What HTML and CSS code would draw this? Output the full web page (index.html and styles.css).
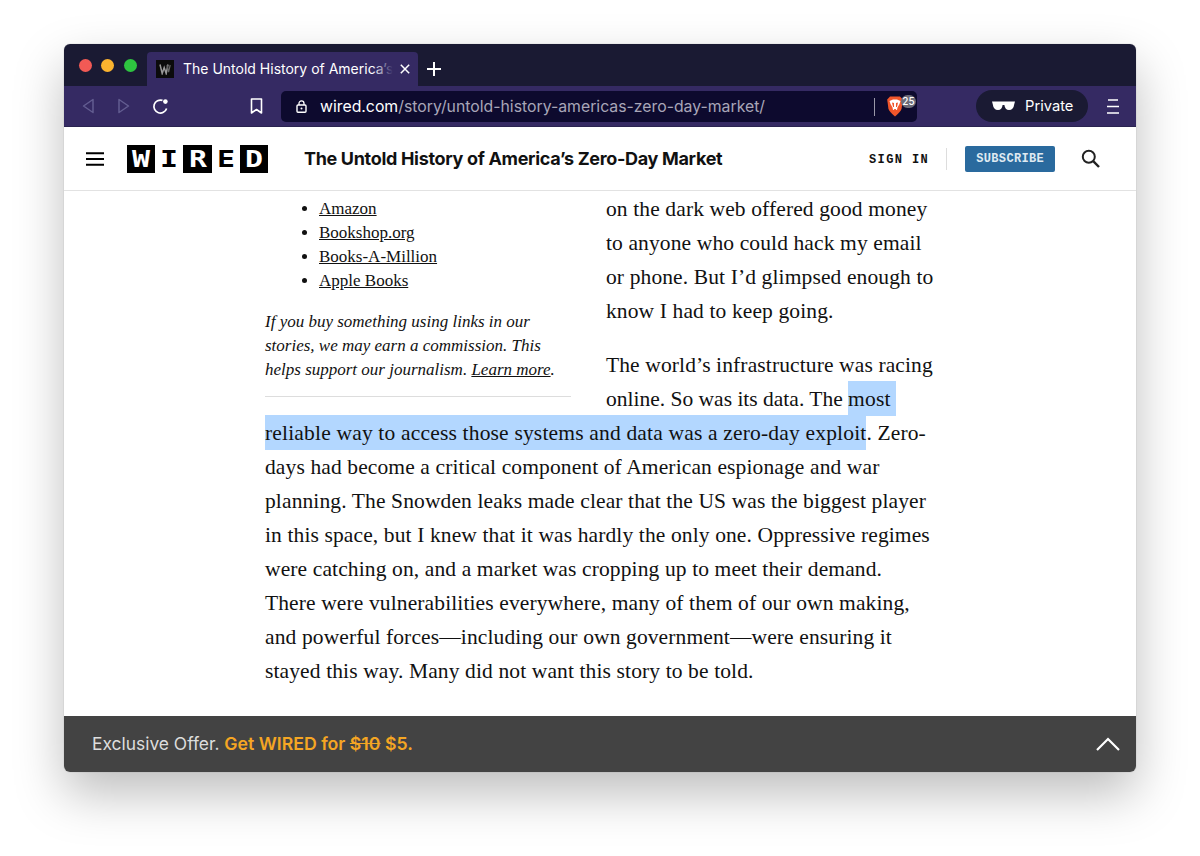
FILE: index.html
```html
<!DOCTYPE html>
<html lang="en">
<head>
    <meta charset="UTF-8">
    <title>The Untold History of America's Zero-Day Market</title>
    <link rel="stylesheet" href="styles.css">
</head>
<body>
    <div class="window">
        <div class="tabstrip">
            <div class="lights">
                <span class="light red"></span>
                <span class="light yellow"></span>
                <span class="light green"></span>
            </div>
            <div class="tab">
                <span class="favicon">
                    <svg width="12" height="12" viewBox="0 0 12 12"><path d="M1 1.5 L3.2 10.5 L5.2 4.5 L7.2 10.5 L9 1.5" fill="none" stroke="#999" stroke-width="1.5"/><path d="M8 2 L9.6 9 L11.2 2" fill="none" stroke="#666" stroke-width="1.2"/></svg>
                </span>
                <span class="tab-title">The Untold History of America’s</span>
                <span class="tab-fade"></span>
                <svg class="tab-close" width="10" height="10" viewBox="0 0 10 10"><path d="M0.8 0.8 L9.2 9.2 M9.2 0.8 L0.8 9.2" stroke="#fff" stroke-width="1.5"/></svg>
            </div>
            <svg class="new-tab" width="14" height="14" viewBox="0 0 14 14"><path d="M7 0 V14 M0 7 H14" stroke="#fff" stroke-width="2"/></svg>
        </div>

        <div class="toolbar">
            <svg class="nav-btn" width="12" height="16" viewBox="0 0 12 16"><path d="M11 1.5 L1.5 8 L11 14.5 Z" fill="none" stroke="#625c90" stroke-width="1.5" stroke-linejoin="round"/></svg>
            <svg class="nav-btn" width="12" height="16" viewBox="0 0 12 16"><path d="M1 1.5 L10.5 8 L1 14.5 Z" fill="none" stroke="#625c90" stroke-width="1.5" stroke-linejoin="round"/></svg>
            <svg class="reload" width="17" height="17" viewBox="0 0 17 17"><path d="M14.6 10.5 A6.5 6.5 0 1 1 10.5 2.4" fill="none" stroke="#fff" stroke-width="1.7"/><circle cx="13.4" cy="3.6" r="2.3" fill="#fff"/></svg>
            <svg class="bookmark" width="13" height="16" viewBox="0 0 13 16"><path d="M1.5 1 H11.5 V15 L6.5 11.5 L1.5 15 Z" fill="none" stroke="#fff" stroke-width="1.6" stroke-linejoin="round"/></svg>
            <div class="urlbar">
                <svg class="lock" width="11" height="13" viewBox="0 0 11 13"><rect x="1" y="5" width="9" height="7.2" rx="1" fill="none" stroke="#fff" stroke-width="1.4"/><path d="M3 5 V3.4 A2.5 2.5 0 0 1 8 3.4 V5" fill="none" stroke="#fff" stroke-width="1.3"/><circle cx="5.5" cy="8.6" r="1" fill="#fff"/></svg>
                <span class="url"><span class="url-host">wired.com</span>/story/untold-history-americas-zero-day-market/</span>
                <span class="url-divider"></span>
                <span class="shields">
                    <svg width="16" height="21" viewBox="0 0 16 21"><path d="M3 0.5 H13 L15.8 3.5 L14.6 12.5 Q14 15.5 8 20.5 Q2 15.5 1.4 12.5 L0.2 3.5 Z" fill="#f1562b"/><path d="M2.5 5 L6 3.5 H10 L13.5 5 L12.5 8 L10.5 11.5 L10 14 H6 L5.5 11.5 L3.5 8 Z" fill="#fff"/><path d="M5 6.5 L7 7 V11 H6 Z M11 6.5 L9 7 V11 H10 Z M6.6 13 H9.4 L8 14.8 Z" fill="#f1562b"/></svg>
                    <span class="badge">25</span>
                </span>
            </div>
            <div class="private">
                <svg width="23" height="10" viewBox="0 0 23 10"><path d="M0 0.5 H23 L22.3 3 Q21.5 9 17 9 Q13 9 12.4 4 H10.6 Q10 9 6 9 Q1.5 9 0.7 3 Z" fill="#fff"/></svg>
                <span>Private</span>
            </div>
            <svg class="menu" width="12" height="15" viewBox="0 0 12 15"><path d="M1 1 H11 M0 7.5 H12 M0 14 H12" stroke="#fff" stroke-width="1.4"/></svg>
        </div>

        <div class="page">
            <header class="site-header">
                <svg class="burger" width="18" height="14" viewBox="0 0 18 14"><path d="M0 1.2 H18 M0 7 H18 M0 12.8 H18" stroke="#000" stroke-width="2"/></svg>
                <div class="logo">
                    <span class="logo-box dark"><span class="logo-letter">W</span></span>
                    <span class="logo-box"><span class="logo-letter">I</span></span>
                    <span class="logo-box dark"><span class="logo-letter">R</span></span>
                    <span class="logo-box"><span class="logo-letter">E</span></span>
                    <span class="logo-box dark"><span class="logo-letter">D</span></span>
                </div>
                <div class="headline">The Untold History of America’s Zero-Day Market</div>
                <a class="sign-in">SIGN IN</a>
                <span class="header-divider"></span>
                <a class="subscribe">SUBSCRIBE</a>
                <svg class="search" width="19" height="19" viewBox="0 0 19 19"><circle cx="7.8" cy="7.8" r="6" fill="none" stroke="#222" stroke-width="2"/><path d="M12.2 12.2 L18 18" stroke="#222" stroke-width="2.4"/></svg>
            </header>

            <div class="article">
                <aside class="sidebar">
                    <ul class="buy-list">
                        <li><a>Amazon</a></li>
                        <li><a>Bookshop.org</a></li>
                        <li><a>Books-A-Million</a></li>
                        <li><a>Apple Books</a></li>
                    </ul>
                    <p class="note">If you buy something using links in our<br>stories, we may earn a commission. This<br>helps support our journalism. <a>Learn more</a>.</p>
                </aside>
                <p>on the dark web offered good money<br>to anyone who could hack my email<br>or phone. But I’d glimpsed enough to<br>know I had to keep going.</p>
                <p>The world’s infrastructure was racing<br><span class="tight">online. So was its data. The </span><span class="selected most">most</span><br><span class="selected">reliable way to access those systems and data was a zero-day exploit</span>. Zero-<br>days had become a critical component of American espionage and war<br>planning. The Snowden leaks made clear that the US was the biggest player<br>in this space, but I knew that it was hardly the only one. Oppressive regimes<br>were catching on, and a market was cropping up to meet their demand.<br>There were vulnerabilities everywhere, many of them of our own making,<br>and powerful forces—including our own government—were ensuring it<br>stayed this way. Many did not want this story to be told.</p>
            </div>

            <div class="offer">
                <div>Exclusive Offer. <span class="offer-deal">Get WIRED for <s>$10</s> $5.</span></div>
                <svg width="24" height="14" viewBox="0 0 24 14"><path d="M1 13 L12 2 L23 13" fill="none" stroke="#fff" stroke-width="2.2"/></svg>
            </div>
        </div>
    </div>
</body>
</html>
```

FILE: styles.css
```css
html, body {
    margin: 0;
    height: 100%;
    background-color: #fff;
}
body {
    padding: 44px 64px 0;
    box-sizing: border-box;
    height: 856px;
    overflow: hidden;
    font-family: Inter, "Liberation Sans", sans-serif;
}
.window {
    width: 1072px;
    height: 728px;
    border-radius: 6px;
    overflow: hidden;
    display: flex;
    flex-direction: column;
    box-shadow: 0 22px 50px rgba(0,0,0,0.26), 0 0 1px rgba(0,0,0,0.4);
}

/* browser chrome */
.tabstrip {
    height: 42px;
    flex: none;
    background-color: #1a1a33;
    display: flex;
    align-items: flex-end;
}
.lights {
    display: flex;
    gap: 9.5px;
    padding: 0 10.5px 0 14.5px;
    align-self: flex-start;
    margin-top: 15px;
}
.light {
    width: 13px;
    height: 13px;
    border-radius: 50%;
}
.red { background-color: #f25a55; }
.yellow { background-color: #fbb32f; }
.green { background-color: #2ec440; }
.tab {
    width: 271px;
    height: 34px;
    box-sizing: border-box;
    background-color: #352a63;
    border-radius: 4px 4px 0 0;
    display: flex;
    align-items: center;
    padding: 0 9px 1px;
    position: relative;
}
.favicon {
    width: 18px;
    height: 18px;
    flex: none;
    background-color: #0b0b0b;
    display: flex;
    align-items: center;
    justify-content: center;
    margin-right: 9px;
}
.tab-title {
    color: #fff;
    font-size: 14px;
    white-space: nowrap;
}
.tab-fade {
    position: absolute;
    left: 226px;
    top: 0;
    width: 22px;
    height: 34px;
    background: linear-gradient(to right, rgba(53,42,99,0), #352a63 90%);
}
.tab-close {
    position: absolute;
    right: 8px;
    top: 12px;
}
.new-tab {
    margin: 0 0 10px 9px;
}
.toolbar {
    height: 40px;
    flex: none;
    background-color: #352a63;
    display: flex;
    align-items: center;
    border-bottom: 1px solid #2a2350;
}
.nav-btn {
    margin-left: 18px;
    flex: none;
}
.nav-btn + .nav-btn {
    margin-left: 24px;
}
.reload {
    margin-left: 22px;
    flex: none;
}
.bookmark {
    margin-left: 81px;
    flex: none;
}
.urlbar {
    width: 636px;
    height: 31px;
    margin-left: 18px;
    background-color: #0d0a2e;
    border-radius: 5px;
    display: flex;
    align-items: center;
    box-sizing: border-box;
    padding-left: 15px;
    position: relative;
    flex: none;
}
.url {
    color: #a8a6b8;
    font-size: 15.8px;
    margin-left: 13px;
    white-space: nowrap;
}
.url-host {
    color: #fff;
}
.url-divider {
    position: absolute;
    left: 593px;
    top: 7px;
    width: 1px;
    height: 18px;
    background-color: #9a98a8;
}
.shields {
    position: absolute;
    left: 606px;
    top: 5px;
}
.badge {
    position: absolute;
    left: 14px;
    top: -1px;
    width: 15px;
    height: 13px;
    border-radius: 7px;
    background-color: #6b6b78;
    color: #fff;
    font-size: 10px;
    font-weight: 500;
    line-height: 13px;
    text-align: center;
}
.private {
    width: 112px;
    height: 32px;
    margin-left: 59px;
    border-radius: 16px;
    background-color: #1a1a33;
    color: #fff;
    font-size: 14.7px;
    display: flex;
    align-items: center;
    gap: 10px;
    padding-left: 16px;
    box-sizing: border-box;
    flex: none;
}
.menu {
    margin-left: 19px;
    flex: none;
}

/* site header */
.page {
    flex: 1;
    background-color: #fff;
    display: flex;
    flex-direction: column;
    min-height: 0;
}
.site-header {
    height: 64px;
    flex: none;
    border-bottom: 1px solid #e2e2e2;
    box-sizing: border-box;
    display: flex;
    align-items: center;
    padding-left: 22px;
}
.burger {
    flex: none;
}
.logo {
    display: flex;
    margin-left: 23px;
}
.logo-box {
    width: 28.2px;
    height: 28px;
    font-family: "DejaVu Sans Mono", monospace;
    font-weight: 700;
    font-size: 23px;
    line-height: 28px;
    text-align: center;
    color: #000;
}
.logo-box.dark {
    background-color: #000;
    color: #fff;
}
.logo-letter {
    display: inline-block;
    transform: scaleX(1.3);
}
.headline {
    margin-left: 36px;
    font-size: 18px;
    font-weight: 700;
    color: #111;
    letter-spacing: -0.32px;
    width: 565px;
    white-space: nowrap;
}
.sign-in {
    font-family: "Liberation Mono", monospace;
    font-weight: 700;
    font-size: 12px;
    letter-spacing: 1.4px;
    color: #111;
    white-space: nowrap;
    padding-top: 2px;
}
.header-divider {
    width: 1px;
    height: 22px;
    background-color: #ddd;
    margin: 0 18px 0 17px;
}
.subscribe {
    width: 90px;
    height: 26px;
    background-color: #2a6a9e;
    border-radius: 2px;
    color: #dfe9f1;
    font-family: "Liberation Mono", monospace;
    font-weight: 700;
    font-size: 12px;
    letter-spacing: 0.35px;
    line-height: 26px;
    text-align: center;
}
.search {
    margin-left: 26px;
    flex: none;
}

/* article */
.article {
    flex: 1;
    min-height: 0;
    overflow: hidden;
    padding: 1px 0 0 201px;
    width: 700px;
    font-family: "Liberation Serif", serif;
    font-size: 21.5px;
    letter-spacing: 0.12px;
    line-height: 34px;
    color: #111;
}
.article p {
    margin: 0 0 20px;
}
.tight {
    letter-spacing: 0;
}
.selected {
    background-color: #b3d7ff;
    padding: 6px 0 5px;
    letter-spacing: 0.18px;
}
.most {
    padding-right: 5px;
}
.sidebar {
    float: left;
    width: 306px;
    height: 204px;
    margin-right: 35px;
    border-bottom: 1px solid #ddd;
    font-size: 17px;
    letter-spacing: 0;
    line-height: 24px;
}
.buy-list {
    margin: 5px 0 17px;
    padding-left: 54px;
}
.sidebar a, .note a {
    text-decoration: underline;
}
.note {
    font-style: italic;
    margin: 0;
}
.article .note {
    margin: 0;
}

/* offer bar */
.offer {
    height: 56px;
    flex: none;
    box-sizing: border-box;
    background-color: #434343;
    color: #ddd;
    font-size: 17.4px;
    display: flex;
    align-items: center;
    justify-content: space-between;
    padding: 0 16px 1px 28px;
}
.offer-deal {
    color: #f5a623;
    font-size: 17.7px;
    font-weight: 600;
}
```
